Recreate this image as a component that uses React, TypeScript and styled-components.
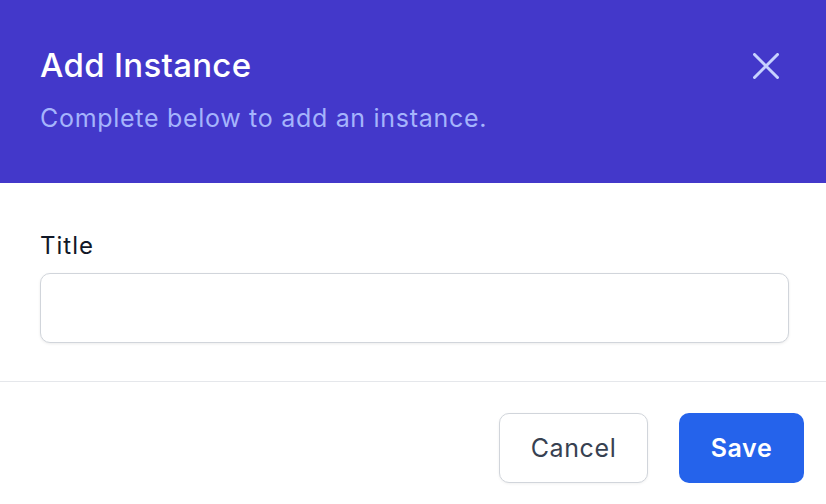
import React from "react";
import styled, { createGlobalStyle } from "styled-components";

const Global = createGlobalStyle`
  html, body { margin: 0; padding: 0; background: #ffffff; }
  body { font-family: Inter, "Noto Sans", sans-serif; -webkit-font-smoothing: antialiased; }
  * { box-sizing: border-box; }
`;

const Panel = styled.div`
  width: 826px;
  height: 504px;
  display: flex;
  flex-direction: column;
  background: #ffffff;
  overflow: hidden;
`;

const Header = styled.header`
  background: #4338ca;
  height: 183px;
  padding: 45px 40px 0 40px;
  display: flex;
  justify-content: space-between;
  align-items: flex-start;
`;

const HeaderText = styled.div`
  display: flex;
  flex-direction: column;
  gap: 17px;
`;

const Title = styled.h2`
  margin: 0;
  font-size: 33px;
  line-height: 40px;
  font-weight: 500;
  letter-spacing: 0.3px;
  color: #ffffff;
`;

const Subtitle = styled.p`
  margin: 0;
  font-size: 25px;
  line-height: 32px;
  letter-spacing: 0.7px;
  color: #a5b4fc;
`;

const CloseButton = styled.button`
  margin: 8px 7px 0 0;
  width: 26px;
  height: 26px;
  padding: 0;
  border: none;
  background: transparent;
  color: #c7d2fe;
  display: flex;
  align-items: center;
  justify-content: center;
  cursor: pointer;
`;

const Body = styled.div`
  padding: 47px 37px 38px 40px;
  display: flex;
  flex-direction: column;
  gap: 11px;
`;

const Label = styled.label`
  font-size: 24px;
  line-height: 32px;
  font-weight: 400;
  letter-spacing: 1px;
  color: #111827;
`;

const Input = styled.input`
  height: 70px;
  width: 100%;
  border: 1px solid #d1d5db;
  border-radius: 10px;
  box-shadow: 0 1px 3px rgba(0, 0, 0, 0.08);
  font-family: inherit;
  font-size: 24px;
  padding: 0 18px;
  outline: none;
`;

const Footer = styled.footer`
  border-top: 1px solid #e5e7eb;
  padding: 31px 22px 0 0;
  display: flex;
  justify-content: flex-end;
  gap: 31px;
`;

const Button = styled.button<{ $primary?: boolean }>`
  height: 70px;
  border-radius: 10px;
  font-family: inherit;
  font-size: 25px;
  letter-spacing: 0.6px;
  cursor: pointer;
  display: flex;
  align-items: center;
  justify-content: center;
  ${(p) =>
    p.$primary
      ? `
    width: 125px;
    background: #2563eb;
    color: #ffffff;
    border: none;
    font-weight: 600;
  `
      : `
    width: 149px;
    background: #ffffff;
    color: #374151;
    border: 1px solid #d1d5db;
    font-weight: 400;
    box-shadow: 0 1px 3px rgba(0, 0, 0, 0.06);
  `}
`;

export default function App() {
  return (
    <>
      <Global />
      <Panel>
        <Header>
          <HeaderText>
            <Title>Add Instance</Title>
            <Subtitle>Complete below to add an instance.</Subtitle>
          </HeaderText>
          <CloseButton aria-label="Close">
            <svg width="26" height="26" viewBox="0 0 26 26" fill="none">
              <path d="M1.5 1.5L24.5 24.5M24.5 1.5L1.5 24.5" stroke="currentColor" strokeWidth="3" strokeLinecap="round" />
            </svg>
          </CloseButton>
        </Header>
        <Body>
          <Label htmlFor="title">Title</Label>
          <Input id="title" type="text" />
        </Body>
        <Footer>
          <Button>Cancel</Button>
          <Button $primary>Save</Button>
        </Footer>
      </Panel>
    </>
  );
}
